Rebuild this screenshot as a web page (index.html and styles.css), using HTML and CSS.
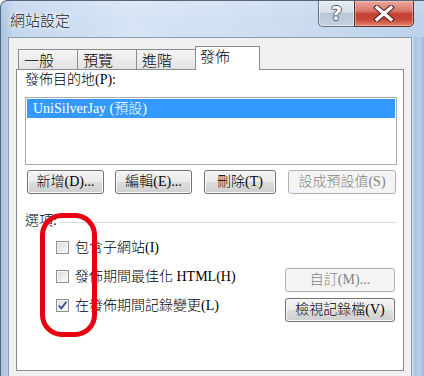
FILE: index.html
```html
<!DOCTYPE html>
<html lang="zh-Hant">
<head>
<meta charset="utf-8">
<title>網站設定</title>
<link rel="stylesheet" href="styles.css">
</head>
<body>
<div class="window">
  <div class="titlebar">
    <div class="title">網站設定</div>
    <div class="caption">
      <div class="cbtn help"><span class="q">?</span></div>
      <div class="cbtn close">
        <svg width="26" height="17" viewBox="0 0 26 17">
          <path d="M6 2.5 L20 14.5 M20 2.5 L6 14.5" stroke="#5a2a25" stroke-width="5.5" stroke-linecap="square"/>
          <path d="M6 2.5 L20 14.5 M20 2.5 L6 14.5" stroke="#ffffff" stroke-width="3.2" stroke-linecap="square"/>
        </svg>
      </div>
    </div>
  </div>
  <div class="body">
    <div class="client">
      <div class="tabs">
        <div class="tab t1">一般</div>
        <div class="tab">預覽</div>
        <div class="tab">進階</div>
        <div class="tab active">發佈</div>
      </div>
      <div class="panel">
        <div class="label">發佈目的地(P):</div>
        <div class="listbox">
          <div class="item sel">UniSilverJay (預設)</div>
        </div>
        <div class="btnrow">
          <div class="btn w1">新增(D)...</div>
          <div class="btn w2">編輯(E)...</div>
          <div class="btn w3">刪除(T)</div>
          <div class="btn w4 disabled">設成預設值(S)</div>
        </div>
        <div class="grouphead"><span>選項:</span><div class="rule"></div></div>
        <div class="opts">
          <div class="row">
            <div class="chk"><span class="box"></span><span class="txt">包含子網站(I)</span></div>
          </div>
          <div class="row">
            <div class="chk"><span class="box"></span><span class="txt">發佈期間最佳化 HTML(H)</span></div>
            <div class="btn side disabled up">自訂(M)...</div>
          </div>
          <div class="row">
            <div class="chk"><span class="box checked"><svg width="11" height="11" viewBox="0 0 11 11"><path d="M1.8 5.6 L4.4 8.4 L9.4 1.8" fill="none" stroke="#3c4f8a" stroke-width="1.8"/></svg></span><span class="txt">在發佈期間記錄變更(L)</span></div>
            <div class="btn side">檢視記錄檔(V)</div>
          </div>
        </div>
      </div>
    </div>
    <div class="frame-right"></div>
  </div>
  <div class="annot"></div>
</div>
</body>
</html>
```

FILE: styles.css
```css
html, body {
  margin: 0;
  padding: 0;
  width: 424px;
  height: 376px;
  overflow: hidden;
  background: #ffffff;
}

.window {
  position: relative;
  width: 424px;
  height: 376px;
  box-sizing: border-box;
  border-top: 1px solid #55657a;
  border-left: 1px solid #55657a;
  border-top-left-radius: 7px;
  overflow: hidden;
  background: linear-gradient(to right, #a9c3e2 0%, #c3d7ee 3%, #d6e4f4 30%, #cfdff2 60%, #bcd2eb 100%);
  font-family: "Liberation Serif", "Noto Sans CJK TC", serif;
  font-weight: 300;
  color: #000;
}

.titlebar {
  height: 36px;
  display: flex;
  justify-content: space-between;
  align-items: flex-start;
  padding-right: 10px;
  background: linear-gradient(to bottom, rgba(255,255,255,0.15), rgba(255,255,255,0) 60%);
}

.title {
  font-family: "Noto Sans CJK TC", sans-serif;
  font-weight: 300;
  font-size: 15px;
  line-height: 18px;
  margin-top: 10px;
  margin-left: 9px;
  color: #1a1a1a;
  text-shadow: 0 0 6px #ffffff, 0 0 3px #ffffff;
}

.caption {
  display: flex;
  margin-top: -1px;
}

.cbtn {
  height: 27px;
  box-sizing: border-box;
  display: flex;
  align-items: center;
  justify-content: center;
}

.help {
  width: 36px;
  border: 1px solid #5f6f85;
  border-right: none;
  border-bottom-left-radius: 5px;
  background: linear-gradient(to bottom, #e8edf4 0%, #d4dde9 45%, #b9c6d6 50%, #c3d0df 100%);
  box-shadow: inset 0 0 0 1px rgba(255,255,255,0.55);
}

.q {
  font-family: "DejaVu Sans", sans-serif;
  font-size: 19px;
  font-weight: bold;
  line-height: 20px;
  color: #ffffff;
  margin-top: -2px;
  text-shadow: -1px 0 #4d5a6b, 1px 0 #4d5a6b, 0 -1px #4d5a6b, 0 1px #4d5a6b;
}

.close {
  width: 60px;
  border: 1px solid #5a2c2a;
  border-bottom-right-radius: 5px;
  background: linear-gradient(to bottom, #e9a99e 0%, #d9776b 40%, #c2402f 52%, #c9473a 75%, #e0866c 100%);
  box-shadow: inset 0 0 0 1px rgba(255,210,200,0.5);
}

.close svg {
  display: block;
}

.body {
  display: flex;
  height: 339px;
}

.client {
  margin-left: 7px;
  width: 404px;
  box-sizing: border-box;
  border: 1px solid #8c9cb0;
  border-bottom: none;
  background: #f0f0f0;
  padding: 8px 7px 0 7px;
  display: flex;
  flex-direction: column;
}

.frame-right {
  flex: 1;
  background: linear-gradient(to right, #dbe7f4 0%, #a9c4e3 20%, #b8cfea 60%, #9db9dc 100%);
}

.tabs {
  display: flex;
  align-items: flex-end;
  height: 23px;
  padding-left: 1px;
  position: relative;
  z-index: 2;
}

.tab {
  width: 60px;
  height: 20px;
  box-sizing: border-box;
  border: 1px solid #898c95;
  border-bottom: none;
  margin-left: -1px;
  background: linear-gradient(to bottom, #f5f5f5 0%, #ececec 50%, #e2e2e2 100%);
  font-family: "Noto Sans CJK TC", sans-serif;
  font-weight: 300;
  font-size: 15px;
  line-height: 16px;
  padding: 2px 0 0 5px;
}

.tab.t1 {
  margin-left: 1px;
}

.tab.active {
  width: 65px;
  height: 24px;
  margin-bottom: -1px;
  background: #ffffff;
  padding-top: 1px;
  padding-left: 4px;
}

.panel {
  position: relative;
  z-index: 1;
  height: 302px;
  box-sizing: border-box;
  background: #ffffff;
  border: 1px solid #898c95;
  padding: 2px 6px 0 8px;
}

.label {
  font-size: 14px;
  line-height: 16px;
}

.listbox {
  margin-top: 9px;
  height: 68px;
  box-sizing: border-box;
  border: 1px solid #a9abb2;
  padding: 1px;
}

.item {
  height: 19px;
  font-size: 14px;
  line-height: 19px;
  padding-left: 6px;
}

.item.sel {
  background: #3399ff;
  color: #ffffff;
}

.btnrow {
  display: flex;
  margin-top: 5px;
  margin-left: 2px;
}

.btn {
  height: 24px;
  box-sizing: border-box;
  border: 1px solid #707070;
  border-radius: 3px;
  background: linear-gradient(to bottom, #f2f2f2 0%, #ebebeb 48%, #dddddd 52%, #cfcfcf 100%);
  box-shadow: inset 0 0 0 1px #fbfbfb;
  font-size: 14px;
  line-height: 22px;
  text-align: center;
  white-space: nowrap;
  color: #000;
}

.btn.disabled {
  border-color: #adb2b5;
  background: #f4f4f4;
  box-shadow: none;
  color: #838383;
}

.w1 { width: 77px; }
.w2 { width: 77px; margin-left: 11px; }
.w3 { width: 72px; margin-left: 12px; }
.w4 { width: 108px; margin-left: 12px; }

.grouphead {
  display: flex;
  align-items: center;
  margin-top: 19px;
  font-size: 14px;
  line-height: 16px;
}

.rule {
  flex: 1;
  height: 1px;
  background: #d5dfe5;
  margin-left: 3px;
  margin-top: 2px;
}

.opts {
  margin-top: 11px;
  margin-right: 2px;
}

.row {
  height: 29px;
  display: flex;
  justify-content: space-between;
  align-items: flex-start;
}

.chk {
  display: flex;
  align-items: center;
  height: 14px;
  margin-left: 31px;
  margin-top: 0;
}

.box {
  width: 13px;
  height: 13px;
  box-sizing: border-box;
  border: 1px solid #8e8f8f;
  background: linear-gradient(135deg, #d6d6d6 0%, #ececec 55%, #fafafa 100%);
  box-shadow: inset 0 0 0 1px #f6f6f6;
  display: flex;
  align-items: center;
  justify-content: center;
}

.txt {
  margin-left: 6px;
  font-size: 14px;
  line-height: 14px;
  white-space: nowrap;
  position: relative;
  top: 1px;
}

.btn.side {
  width: 110px;
}

.btn.up {
  margin-top: -1px;
}

.annot {
  position: absolute;
  left: 39px;
  top: 212px;
  width: 57px;
  height: 124px;
  box-sizing: border-box;
  border: 5px solid #e60012;
  border-radius: 22px;
  z-index: 5;
}
```
